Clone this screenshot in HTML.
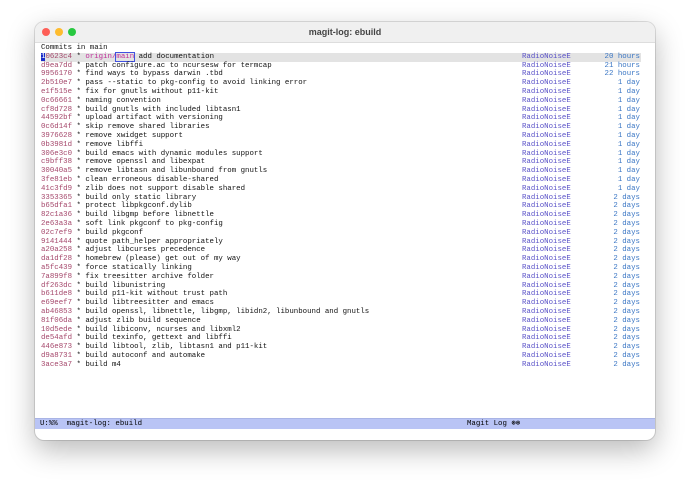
<!DOCTYPE html>
<html><head><meta charset="utf-8"><style>
body{margin:0;width:690px;height:487px;background:#fff;position:relative;overflow:hidden;font-family:"Liberation Mono",monospace}
.win{position:absolute;left:35px;top:22px;width:620px;height:418px;border-radius:9px;background:#fff;box-shadow:0 10px 28px rgba(0,0,0,.28),0 0 0 1px rgba(0,0,0,.12);overflow:hidden}
.tb{height:20px;background:#f0f0f0;border-bottom:1px solid #ddd;position:relative;font-family:"Liberation Sans",sans-serif;font-size:9px;font-weight:bold;color:#444;text-align:center;line-height:20px}
.d{position:absolute;top:6px;width:8px;height:8px;border-radius:50%}
.c{position:absolute;left:6px;top:22px;font-size:7.4px;line-height:8.8px;color:#111}
.r{height:8.8px;position:relative;width:600px;white-space:pre}
.h{color:#a5476b}.a{position:absolute;left:481px;color:#5b53c8}.t{position:absolute;left:555px;width:44px;text-align:right;color:#3a76c4}
.sel{background:#e3e3e3}
.ml{position:absolute;left:0;right:0;top:396px;height:10px;background:#b9c4f5;border-top:1px solid #a9b4e5;font-size:7.4px;line-height:10px;white-space:pre}
</style></head><body>
<div class="win">
<div class="tb"><span class="d" style="left:7px;background:#fe5f57"></span><span class="d" style="left:20px;background:#febc2e"></span><span class="d" style="left:33px;background:#28c840"></span>magit-log: ebuild</div>
<div class="c"><div class="r">Commits in main</div><div class="r sel"><span class="h"><span style="background:#1a2cc8;color:#fff">1</span>0623c4</span> * <span style="color:#c0309a">origin/</span><span style="color:#c0309a;outline:1px solid #4050e0">main</span> add documentation<span class="a">RadioNoiseE</span><span class="t">20 hours</span></div><div class="r"><span class="h">d9ea7dd</span> * patch configure.ac to ncursesw for termcap<span class="a">RadioNoiseE</span><span class="t">21 hours</span></div><div class="r"><span class="h">9956170</span> * find ways to bypass darwin .tbd<span class="a">RadioNoiseE</span><span class="t">22 hours</span></div><div class="r"><span class="h">2b510e7</span> * pass --static to pkg-config to avoid linking error<span class="a">RadioNoiseE</span><span class="t">1 day</span></div><div class="r"><span class="h">e1f515e</span> * fix for gnutls without p11-kit<span class="a">RadioNoiseE</span><span class="t">1 day</span></div><div class="r"><span class="h">0c66661</span> * naming convention<span class="a">RadioNoiseE</span><span class="t">1 day</span></div><div class="r"><span class="h">cf8d728</span> * build gnutls with included libtasn1<span class="a">RadioNoiseE</span><span class="t">1 day</span></div><div class="r"><span class="h">44592bf</span> * upload artifact with versioning<span class="a">RadioNoiseE</span><span class="t">1 day</span></div><div class="r"><span class="h">0c6d14f</span> * skip remove shared libraries<span class="a">RadioNoiseE</span><span class="t">1 day</span></div><div class="r"><span class="h">3976628</span> * remove xwidget support<span class="a">RadioNoiseE</span><span class="t">1 day</span></div><div class="r"><span class="h">0b3981d</span> * remove libffi<span class="a">RadioNoiseE</span><span class="t">1 day</span></div><div class="r"><span class="h">306e3c0</span> * build emacs with dynamic modules support<span class="a">RadioNoiseE</span><span class="t">1 day</span></div><div class="r"><span class="h">c9bff38</span> * remove openssl and libexpat<span class="a">RadioNoiseE</span><span class="t">1 day</span></div><div class="r"><span class="h">30040a5</span> * remove libtasn and libunbound from gnutls<span class="a">RadioNoiseE</span><span class="t">1 day</span></div><div class="r"><span class="h">3fe81eb</span> * clean erroneous disable-shared<span class="a">RadioNoiseE</span><span class="t">1 day</span></div><div class="r"><span class="h">41c3fd9</span> * zlib does not support disable shared<span class="a">RadioNoiseE</span><span class="t">1 day</span></div><div class="r"><span class="h">3353365</span> * build only static library<span class="a">RadioNoiseE</span><span class="t">2 days</span></div><div class="r"><span class="h">b65dfa1</span> * protect libpkgconf.dylib<span class="a">RadioNoiseE</span><span class="t">2 days</span></div><div class="r"><span class="h">82c1a36</span> * build libgmp before libnettle<span class="a">RadioNoiseE</span><span class="t">2 days</span></div><div class="r"><span class="h">2e63a3a</span> * soft link pkgconf to pkg-config<span class="a">RadioNoiseE</span><span class="t">2 days</span></div><div class="r"><span class="h">02c7ef9</span> * build pkgconf<span class="a">RadioNoiseE</span><span class="t">2 days</span></div><div class="r"><span class="h">9141444</span> * quote path_helper appropriately<span class="a">RadioNoiseE</span><span class="t">2 days</span></div><div class="r"><span class="h">a20a258</span> * adjust libcurses precedence<span class="a">RadioNoiseE</span><span class="t">2 days</span></div><div class="r"><span class="h">da1df28</span> * homebrew (please) get out of my way<span class="a">RadioNoiseE</span><span class="t">2 days</span></div><div class="r"><span class="h">a5fc439</span> * force statically linking<span class="a">RadioNoiseE</span><span class="t">2 days</span></div><div class="r"><span class="h">7a899f8</span> * fix treesitter archive folder<span class="a">RadioNoiseE</span><span class="t">2 days</span></div><div class="r"><span class="h">df263dc</span> * build libunistring<span class="a">RadioNoiseE</span><span class="t">2 days</span></div><div class="r"><span class="h">b611de8</span> * build p11-kit without trust path<span class="a">RadioNoiseE</span><span class="t">2 days</span></div><div class="r"><span class="h">e69eef7</span> * build libtreesitter and emacs<span class="a">RadioNoiseE</span><span class="t">2 days</span></div><div class="r"><span class="h">ab46853</span> * build openssl, libnettle, libgmp, libidn2, libunbound and gnutls<span class="a">RadioNoiseE</span><span class="t">2 days</span></div><div class="r"><span class="h">81f06da</span> * adjust zlib build sequence<span class="a">RadioNoiseE</span><span class="t">2 days</span></div><div class="r"><span class="h">10d5ede</span> * build libiconv, ncurses and libxml2<span class="a">RadioNoiseE</span><span class="t">2 days</span></div><div class="r"><span class="h">de54afd</span> * build texinfo, gettext and libffi<span class="a">RadioNoiseE</span><span class="t">2 days</span></div><div class="r"><span class="h">446e873</span> * build libtool, zlib, libtasn1 and p11-kit<span class="a">RadioNoiseE</span><span class="t">2 days</span></div><div class="r"><span class="h">d9a8731</span> * build autoconf and automake<span class="a">RadioNoiseE</span><span class="t">2 days</span></div><div class="r"><span class="h">3ace3a7</span> * build m4<span class="a">RadioNoiseE</span><span class="t">2 days</span></div></div>
<div class="ml"><span style="position:absolute;left:5px">U:%%  magit-log: ebuild</span><span style="position:absolute;left:432px">Magit Log ⊛⊛</span></div>
</div>
</body></html>
